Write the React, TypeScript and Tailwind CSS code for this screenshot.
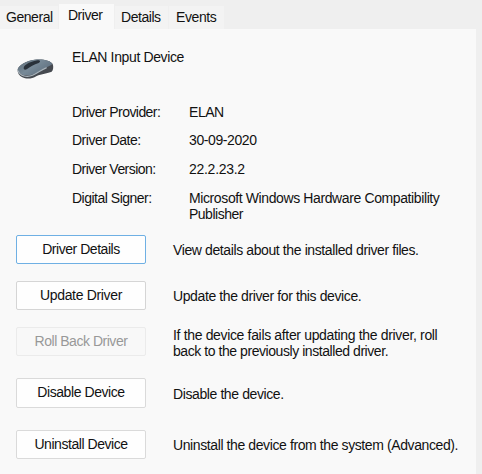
const tabs = [
  { label: "General", box: "w-[58px] h-[23px] pl-[6px] pt-[3px] bg-[#f3f3f3] tracking-[-0.45px]", active: false },
  { label: "Driver", box: "w-[55px] h-[25px] pl-[9px] pt-[3px] bg-[#f9f9f9] tracking-[-0.5px]", active: true },
  { label: "Details", box: "w-[53px] h-[23px] pl-[6px] pt-[3px] bg-[#f3f3f3] tracking-[-0.45px]", active: false },
  { label: "Events", box: "w-[55px] h-[23px] pl-[7px] pt-[3px] bg-[#f3f3f3] tracking-[-0.4px]", active: false },
];

const facts = [
  { name: "Driver Provider:", track: "tracking-[-0.56px]", lines: [{ text: "ELAN", track: "tracking-[-0.45px]" }], row: "h-[28px]" },
  { name: "Driver Date:", track: "tracking-[-0.5px]", lines: [{ text: "30-09-2020", track: "tracking-[-0.4px]" }], row: "h-[29px]" },
  { name: "Driver Version:", track: "tracking-[-0.55px]", lines: [{ text: "22.2.23.2", track: "tracking-[-0.28px]" }], row: "h-[29px]" },
  {
    name: "Digital Signer:",
    track: "tracking-[-0.5px]",
    lines: [
      { text: "Microsoft Windows Hardware Compatibility", track: "tracking-[-0.39px]" },
      { text: "Publisher", track: "tracking-[-0.5px]" },
    ],
    row: "h-[45px]",
  },
];

const actions = [
  {
    label: "Driver Details",
    row: "h-[46px]",
    button: "h-[29px] border-[#6fb0e4] bg-[#fefefe] text-[#111] tracking-[-0.46px]",
    desc: "pt-[7px]",
    lines: [{ text: "View details about the installed driver files.", track: "tracking-[-0.39px]" }],
  },
  {
    label: "Update Driver",
    row: "h-[46px]",
    button: "h-[29px] border-[#d5d5d5] bg-[#fefefe] text-[#111] tracking-[-0.34px]",
    desc: "pt-[7px]",
    lines: [{ text: "Update the driver for this device.", track: "tracking-[-0.39px]" }],
  },
  {
    label: "Roll Back Driver",
    row: "h-[51px]",
    button: "h-[29px] border-[#ebebeb] bg-[#f8f8f8] text-[#989898] tracking-[-0.47px]",
    desc: "pt-0",
    lines: [
      { text: "If the device fails after updating the driver, roll", track: "tracking-[-0.34px]" },
      { text: "back to the previously installed driver.", track: "tracking-[-0.44px]" },
    ],
  },
  {
    label: "Disable Device",
    row: "h-[52px]",
    button: "h-[30px] border-[#dadada] bg-[#fefefe] text-[#111] tracking-[-0.43px]",
    desc: "pt-[8px]",
    lines: [{ text: "Disable the device.", track: "tracking-[-0.4px]" }],
  },
  {
    label: "Uninstall Device",
    row: "h-[30px]",
    button: "h-[29px] border-[#dadada] bg-[#fefefe] text-[#111] tracking-[-0.45px]",
    desc: "pt-[7px]",
    lines: [{ text: "Uninstall the device from the system (Advanced).", track: "tracking-[-0.4px]" }],
  },
];

function MouseIcon() {
  return (
    <svg width="38" height="24" viewBox="0 0 114 72" className="block">
      <defs>
        <linearGradient id="shell" x1="0" y1="0" x2="1" y2="0.6">
          <stop offset="0" stopColor="#5a6873" />
          <stop offset="0.5" stopColor="#788a98" />
          <stop offset="1" stopColor="#5f7080" />
        </linearGradient>
      </defs>
      <path d="M5 41C8 28 30 14 56 11C80 8 104 13 110 24C113 32 112 42 107 47C96 52 76 53 62 60C46 70 30 69 19 64C10 59 4 51 5 41Z" fill="#464a50" />
      <path d="M5 39C8 28 30 14 56 11C80 8 104 13 109 24C103 31 86 34 72 44C54 57 34 61 20 56C10 52 4 45 5 39Z" fill="url(#shell)" />
      <path d="M6 44C13 61 33 65 50 58C66 51 74 42 92 35" fill="none" stroke="#a9b4bc" strokeWidth="3.5" />
      <path d="M23 37C23 28 36 19 64 13C73 12 75 17 68 21C54 25 42 32 32 40C27 43 23 41 23 37Z" fill="#29313a" />
    </svg>
  );
}

export default function App() {
  return (
    <div className="flex h-[474px] w-[482px] flex-col overflow-hidden bg-[#efefef] font-['Liberation_Sans',Arial,sans-serif] text-[14px] leading-[16px] whitespace-nowrap text-[#111]">
      <div className="flex h-[29px] items-end gap-px">
        {tabs.map((t) => (
          <div key={t.label} role="tab" aria-selected={t.active} className={t.box}>
            {t.label}
          </div>
        ))}
      </div>
      <main className="mr-[6px] grow bg-[#f9f9f9]">
        <div className="flex h-[75px] pt-[20px] pl-[16px]">
          <div className="w-[56px] pt-[7px]">
            <MouseIcon />
          </div>
          <h1 className="tracking-[-0.37px]">ELAN Input Device</h1>
        </div>
        <dl className="h-[131px] pl-[72px]">
          {facts.map((f) => (
            <div key={f.name} className={`flex ${f.row}`}>
              <dt className={`w-[117px] ${f.track}`}>{f.name}</dt>
              <dd>
                {f.lines.map((l) => (
                  <div key={l.text} className={l.track}>{l.text}</div>
                ))}
              </dd>
            </div>
          ))}
        </dl>
        <div className="pl-[16px]">
          {actions.map((a) => (
            <div key={a.label} className={`flex items-start ${a.row}`}>
              <button className={`mr-[27px] flex w-[130px] items-start justify-center rounded-[2px] border pt-[5px] ${a.button}`}>{a.label}</button>
              <div className={a.desc}>
                {a.lines.map((l) => (
                  <div key={l.text} className={l.track}>{l.text}</div>
                ))}
              </div>
            </div>
          ))}
        </div>
      </main>
    </div>
  );
}
